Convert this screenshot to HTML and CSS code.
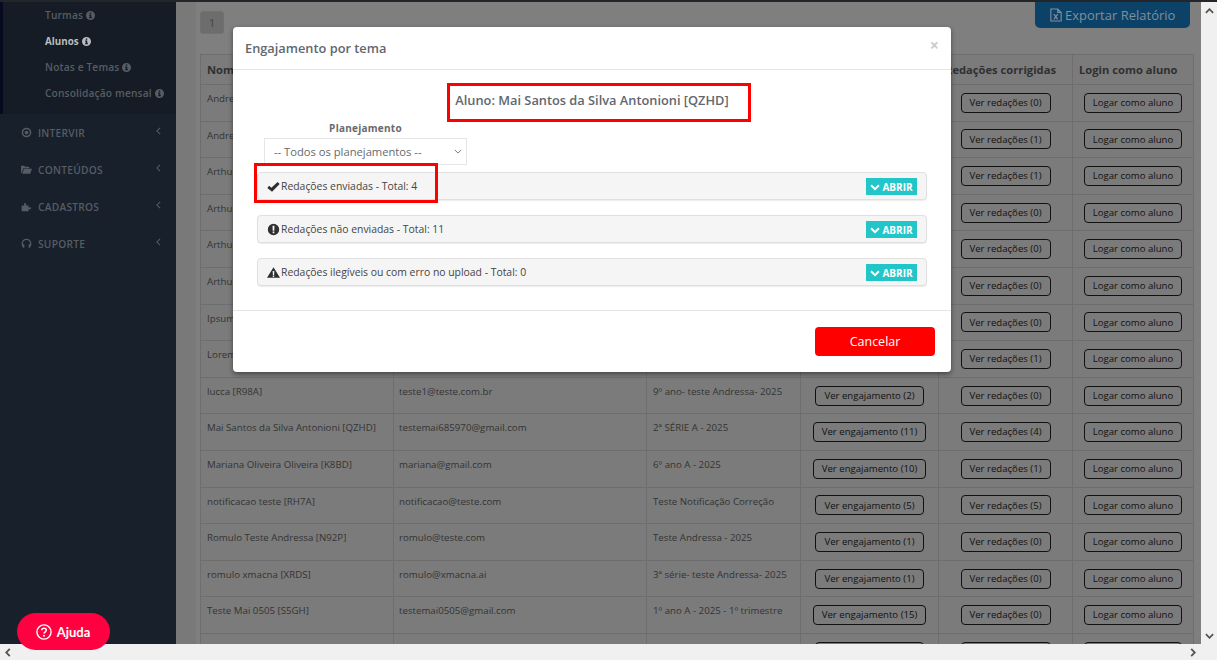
FILE: index.html
```html
<!DOCTYPE html>
<html lang="pt-BR">
<head>
<meta charset="utf-8">
<title>Engajamento por tema</title>
<link rel="stylesheet" href="styles.css">
</head>
<body>
<svg class="defs" aria-hidden="true">
  <symbol id="i-info" viewBox="0 0 16 16"><path fill-rule="evenodd" d="M8 0a8 8 0 1 1 0 16A8 8 0 0 1 8 0zM6.600 2.600v2.500h2.800V2.600zM5.400 6.400v1.700h1.200v3.200H5.400V13h5.200v-1.700H9.400V6.400z"/></symbol>
  <symbol id="i-down" viewBox="0 0 16 16"><path d="M.6 6.200 2.800 4 8 9.200 13.200 4l2.200 2.200L8 13.600z"/></symbol>
</svg>
<div class="screen">
  <div class="topline"></div>
  <div class="main">
    <aside class="sidebar">
      <ul class="submenu">
        <li>Turmas <svg class="info"><use href="#i-info"/></svg></li>
        <li class="active">Alunos <svg class="info"><use href="#i-info"/></svg></li>
        <li>Notas e Temas <svg class="info"><use href="#i-info"/></svg></li>
        <li>Consolidação mensal <svg class="info"><use href="#i-info"/></svg></li>
      </ul>
      <ul class="menu">
        <li>
          <svg class="micon" viewBox="0 0 16 16"><path fill-rule="evenodd" d="M8 1a7 7 0 1 1 0 14A7 7 0 0 1 8 1zm0 2.200a4.800 4.800 0 1 0 0 9.600a4.800 4.800 0 0 0 0-9.600zM8 5.300a2.700 2.700 0 1 1 0 5.400a2.700 2.700 0 0 1 0-5.400z"/></svg>
          <span>INTERVIR</span><svg class="angle" viewBox="0 0 6 10"><path d="M5 1 1 5l4 4"/></svg>
        </li>
        <li>
          <svg class="micon" viewBox="0 0 16 16"><path d="M0 13V3.500L.8 2.700h4l1 1.300h5.400l.8.800V6H3.500L.9 13zM1.800 14 4.300 7H16l-2.700 7z"/></svg>
          <span>CONTEÚDOS</span><svg class="angle" viewBox="0 0 6 10"><path d="M5 1 1 5l4 4"/></svg>
        </li>
        <li>
          <svg class="micon" viewBox="0 0 16 16"><path d="M1 6.500h3.300c.6 0 .7-.5.300-1-.7-.9-.3-2.500 1.300-2.500s2 1.600 1.300 2.500c-.4.500-.3 1 .3 1H11v2.700c0 .6.500.7 1 .3.900-.7 2.500-.3 2.500 1.200s-1.600 1.900-2.500 1.200c-.5-.4-1-.3-1 .3V15H1z"/></svg>
          <span>CADASTROS</span><svg class="angle" viewBox="0 0 6 10"><path d="M5 1 1 5l4 4"/></svg>
        </li>
        <li>
          <svg class="micon" viewBox="0 0 16 16"><path d="M1 11V8a7 7 0 0 1 14 0v3h-1.800V8a5.200 5.200 0 0 0-10.400 0v3zM2.500 9h2.300v5H3.500a1.500 1.500 0 0 1-1.500-1.500V9.500zM11.200 9h2.300l.5.500v3a1.500 1.500 0 0 1-1.500 1.500h-1.300z"/></svg>
          <span>SUPORTE</span><svg class="angle" viewBox="0 0 6 10"><path d="M5 1 1 5l4 4"/></svg>
        </li>
      </ul>
    </aside>
    <main class="content">
      <div class="toolbar">
        <span class="page-num">1</span>
        <button class="export" type="button">
          <svg class="export-icon" viewBox="0 0 14 16"><path fill="none" stroke="currentColor" stroke-width="1.300" d="M1 1h8l4 4v10H1zM9 1v4h4"/><path fill="none" stroke="currentColor" stroke-width="1.500" d="m4.500 7 4.500 6M9 7l-4.500 6"/></svg>Exportar Relatório
        </button>
      </div>
      <table class="grid">
        <colgroup><col class="c1"><col class="c2"><col class="c3"><col class="c4"><col class="c5"><col class="c6"></colgroup>
        <thead><tr><th>Nome</th><th>E-mail</th><th>Turma</th><th>Engajamento</th><th>Redações corrigidas</th><th>Login como aluno</th></tr></thead>
        <tbody>
          <tr><td>Andressa</td><td></td><td></td><td class="mid"><button class="btn" type="button">Ver engajamento (1)</button></td><td class="mid"><button class="btn" type="button">Ver redações (0)</button></td><td class="mid"><button class="btn" type="button">Logar como aluno</button></td></tr>
          <tr><td>Andressa</td><td></td><td></td><td class="mid"><button class="btn" type="button">Ver engajamento (1)</button></td><td class="mid"><button class="btn" type="button">Ver redações (1)</button></td><td class="mid"><button class="btn" type="button">Logar como aluno</button></td></tr>
          <tr><td>Arthur</td><td></td><td></td><td class="mid"><button class="btn" type="button">Ver engajamento (1)</button></td><td class="mid"><button class="btn" type="button">Ver redações (1)</button></td><td class="mid"><button class="btn" type="button">Logar como aluno</button></td></tr>
          <tr><td>Arthur</td><td></td><td></td><td class="mid"><button class="btn" type="button">Ver engajamento (1)</button></td><td class="mid"><button class="btn" type="button">Ver redações (0)</button></td><td class="mid"><button class="btn" type="button">Logar como aluno</button></td></tr>
          <tr><td>Arthur</td><td></td><td></td><td class="mid"><button class="btn" type="button">Ver engajamento (1)</button></td><td class="mid"><button class="btn" type="button">Ver redações (0)</button></td><td class="mid"><button class="btn" type="button">Logar como aluno</button></td></tr>
          <tr><td>Arthur</td><td></td><td></td><td class="mid"><button class="btn" type="button">Ver engajamento (1)</button></td><td class="mid"><button class="btn" type="button">Ver redações (0)</button></td><td class="mid"><button class="btn" type="button">Logar como aluno</button></td></tr>
          <tr><td>Ipsum</td><td></td><td></td><td class="mid"><button class="btn" type="button">Ver engajamento (1)</button></td><td class="mid"><button class="btn" type="button">Ver redações (0)</button></td><td class="mid"><button class="btn" type="button">Logar como aluno</button></td></tr>
          <tr><td>Lorem</td><td></td><td></td><td class="mid"><button class="btn" type="button">Ver engajamento (1)</button></td><td class="mid"><button class="btn" type="button">Ver redações (1)</button></td><td class="mid"><button class="btn" type="button">Logar como aluno</button></td></tr>
          <tr><td>lucca [R98A]</td><td>teste1@teste.com.br</td><td>9º ano- teste Andressa- 2025</td><td class="mid"><button class="btn" type="button">Ver engajamento (2)</button></td><td class="mid"><button class="btn" type="button">Ver redações (0)</button></td><td class="mid"><button class="btn" type="button">Logar como aluno</button></td></tr>
          <tr><td>Mai Santos da Silva Antonioni [QZHD]</td><td>testemai685970@gmail.com</td><td>2ª SÉRIE A - 2025</td><td class="mid"><button class="btn" type="button">Ver engajamento (11)</button></td><td class="mid"><button class="btn" type="button">Ver redações (4)</button></td><td class="mid"><button class="btn" type="button">Logar como aluno</button></td></tr>
          <tr><td>Mariana Oliveira Oliveira [K8BD]</td><td>mariana@gmail.com</td><td>6º ano A - 2025</td><td class="mid"><button class="btn" type="button">Ver engajamento (10)</button></td><td class="mid"><button class="btn" type="button">Ver redações (1)</button></td><td class="mid"><button class="btn" type="button">Logar como aluno</button></td></tr>
          <tr><td>notificacao teste [RH7A]</td><td>notificacao@teste.com</td><td>Teste Notificação Correção</td><td class="mid"><button class="btn" type="button">Ver engajamento (5)</button></td><td class="mid"><button class="btn" type="button">Ver redações (5)</button></td><td class="mid"><button class="btn" type="button">Logar como aluno</button></td></tr>
          <tr><td>Romulo Teste Andressa [N92P]</td><td>romulo@teste.com</td><td>Teste Andressa - 2025</td><td class="mid"><button class="btn" type="button">Ver engajamento (1)</button></td><td class="mid"><button class="btn" type="button">Ver redações (0)</button></td><td class="mid"><button class="btn" type="button">Logar como aluno</button></td></tr>
          <tr><td>romulo xmacna [XRDS]</td><td>romulo@xmacna.ai</td><td>3ª série- teste Andressa- 2025</td><td class="mid"><button class="btn" type="button">Ver engajamento (1)</button></td><td class="mid"><button class="btn" type="button">Ver redações (0)</button></td><td class="mid"><button class="btn" type="button">Logar como aluno</button></td></tr>
          <tr><td>Teste Mai 0505 [S5GH]</td><td>testemai0505@gmail.com</td><td>1º ano A - 2025 - 1º trimestre</td><td class="mid"><button class="btn" type="button">Ver engajamento (15)</button></td><td class="mid"><button class="btn" type="button">Ver redações (0)</button></td><td class="mid"><button class="btn" type="button">Logar como aluno</button></td></tr>
          <tr><td>Tema 2 [X9ZP]</td><td>tema2@teste.com</td><td>2º ano A - teste Andressa - 2025</td><td class="mid"><button class="btn" type="button">Ver engajamento (1)</button></td><td class="mid"><button class="btn" type="button">Ver redações (0)</button></td><td class="mid"><button class="btn" type="button">Logar como aluno</button></td></tr>
        </tbody>
      </table>
    </main>
    <div class="vbar">
      <svg class="sb-arrow" viewBox="0 0 10 6"><path d="M1 5 5 1l4 4"/></svg>
      <svg class="sb-arrow" viewBox="0 0 10 6"><path d="M1 1l4 4 4-4"/></svg>
    </div>
    <section class="modal">
      <header class="modal-head"><h2>Engajamento por tema</h2><span class="close">×</span></header>
      <div class="modal-body">
        <h3 class="student">Aluno: Mai Santos da Silva Antonioni [QZHD]</h3>
        <div class="filter">
          <label class="filter-label" for="plan">Planejamento</label>
          <select class="filter-select" id="plan"><option>-- Todos os planejamentos --</option></select>
        </div>
        <div class="panel">
          <span class="panel-title"><svg class="picon" viewBox="0 0 16 16"><path d="M.4 9.800 2.600 7.200l2.800 2.400L13 2.400l2.600 2.600-9.400 9.600z"/></svg>Redações enviadas - Total: 4</span>
          <span class="open"><svg class="open-icon"><use href="#i-down"/></svg>ABRIR</span>
        </div>
        <div class="panel">
          <span class="panel-title"><svg class="picon" viewBox="0 0 16 16"><path fill-rule="evenodd" d="M8 1a7 7 0 1 1 0 14A7 7 0 0 1 8 1zM6.800 3.400l.2 6h2l.2-6zM7 10.500v2h2v-2z"/></svg>Redações não enviadas - Total: 11</span>
          <span class="open"><svg class="open-icon"><use href="#i-down"/></svg>ABRIR</span>
        </div>
        <div class="panel">
          <span class="panel-title"><svg class="picon" viewBox="0 0 16 16"><path fill-rule="evenodd" d="M8 1.500 16 14.500H0zM7 6l.2 5h1.600L9 6zM7.100 11.800v1.700h1.800v-1.700z"/></svg>Redações ilegíveis ou com erro no upload - Total: 0</span>
          <span class="open"><svg class="open-icon"><use href="#i-down"/></svg>ABRIR</span>
        </div>
      </div>
      <footer class="modal-foot"><button class="cancel" type="button">Cancelar</button></footer>
      <div class="mark mark-student"></div>
      <div class="mark mark-panel"></div>
    </section>
  </div>
  <div class="hbar">
    <svg class="sb-arrow-h" viewBox="0 0 6 10"><path d="M5 1 1 5l4 4"/></svg>
    <svg class="sb-arrow-h" viewBox="0 0 6 10"><path d="M1 1l4 4-4 4"/></svg>
  </div>
  <button class="help" type="button">
    <svg class="help-icon" viewBox="0 0 16 16"><circle cx="8" cy="8" r="7.100" fill="none" stroke="#fff" stroke-width="1.400"/><path fill="none" stroke="#fff" stroke-width="1.500" d="M5.700 6.200C5.800 4.800 6.800 4.200 8 4.200c1.300 0 2.300.8 2.300 1.900 0 1.700-2.300 1.700-2.300 3.500"/><circle cx="8" cy="11.800" r="1" fill="#fff"/></svg>Ajuda
  </button>
</div>
</body>
</html>
```
FILE: styles.css
```css
* { box-sizing: border-box; }
html, body { margin: 0; height: 100%; overflow: hidden; }
body { font-family: "Open Sans", "Liberation Sans", sans-serif; font-size: 11px; color: #3a3a3a; background: #808080; }
.defs { display: none; }
ul { list-style: none; margin: 0; padding: 0; }
button { font-family: inherit; }

.screen { position: relative; display: flex; flex-direction: column; width: 1217px; height: 660px; overflow: hidden; }
.topline { height: 2px; flex: none; background: #22262b; }
.main { position: relative; flex: 1; display: flex; min-height: 0; }

.sidebar { width: 176px; flex: none; background: #18202b; }
.submenu { height: 112px; background: #151c25; border-left: 3px solid #050a1e; }
.submenu li { display: flex; align-items: center; gap: 3px; height: 26px; padding-left: 42px; color: #575d64; font-size: 10.200px; font-weight: 600; letter-spacing: .15px; white-space: nowrap; }
.submenu li.active { color: #b9bcbf; font-size: 9.800px; font-weight: 700; letter-spacing: 0; }
.info { width: 9px; height: 9px; fill: currentColor; }
.menu li { display: flex; align-items: center; height: 37px; padding-left: 21px; color: #565c64; font-size: 10.200px; font-weight: 600; letter-spacing: .25px; }
.menu li span { margin-left: 6px; }
.micon { width: 11px; height: 11px; fill: #565c64; }
.angle { width: 5px; height: 8px; margin-left: auto; margin-right: 15px; margin-top: -4px; fill: none; stroke: #565c64; stroke-width: 1.300; }

.content { flex: 1; min-width: 0; padding: 0 7px 0 4px; background: #7f7f7f; border-left: 20px solid #797979; overflow: hidden; }
.toolbar { display: flex; justify-content: space-between; align-items: flex-start; height: 52px; }
.page-num { display: flex; align-items: center; justify-content: center; width: 24px; height: 23px; margin-top: 9px; border-radius: 3px; background: #6d6d6d; border: 1px solid #717171; color: #3f3f3f; font-size: 10.500px; }
.export { display: flex; align-items: center; gap: 3px; width: 155px; height: 26px; margin-right: 4px; padding: 0 0 0 15px; border: 0; border-radius: 0 0 5px 5px; background: #0d4268; color: #7e8f9d; font-size: 13px; }
.export-icon { width: 12px; height: 14px; }

.grid { width: 993px; border-collapse: collapse; table-layout: fixed; background: #7b7b7b; }
.c1 { width: 193px; } .c2 { width: 253px; } .c3 { width: 154px; } .c4 { width: 138px; } .c5 { width: 134px; } .c6 { width: 121px; }
.grid th, .grid td { border: 1px solid #6e6e6e; padding: 0 6px; text-align: left; }
.grid th { height: 30px; font-size: 11.200px; font-weight: 700; color: #303030; white-space: nowrap; }
.grid td { height: 36.600px; vertical-align: top; padding-top: 7px; font-size: 9.700px; color: #333; white-space: nowrap; overflow: hidden; }
.grid td:nth-child(2) { padding-left: 5px; }
.grid td.mid { text-align: center; vertical-align: middle; padding: 0; overflow: visible; }
.btn { height: 20px; padding: 0 8px; border: 1px solid #111; border-radius: 4px; background: transparent; color: #111; font-size: 9.600px; line-height: 1; white-space: nowrap; }

.vbar { width: 16px; flex: none; display: flex; flex-direction: column; justify-content: space-between; align-items: center; padding: 6px 0 5px; background: #f0f0f0; }
.sb-arrow { width: 9px; height: 6px; fill: none; stroke: #555; stroke-width: 2; }
.hbar { height: 16px; flex: none; display: flex; justify-content: space-between; align-items: center; padding: 0 21px 0 5px; background: #f0f0f0; }
.sb-arrow-h { width: 6px; height: 9px; fill: none; stroke: #555; stroke-width: 2; }

.modal { position: absolute; left: 233px; top: 25px; width: 718px; height: 345px; display: flex; flex-direction: column; background: #fff; border-radius: 4px; box-shadow: 0 2px 5px rgba(0,0,0,.45); color: #676a6c; }
.modal-head { display: flex; justify-content: space-between; align-items: center; height: 43px; flex: none; padding: 0 12px; border-bottom: 1px solid #e5e5e5; }
.modal-head h2 { margin: 0; font-size: 12.800px; font-weight: 600; color: #5f6770; }
.close { margin-top: -6px; font-size: 16px; font-weight: 700; color: #ccc; line-height: 1; }
.modal-body { flex: 1; padding: 0 24px; }
.student { margin: 21px 0 0; text-align: center; font-size: 12.800px; line-height: 18px; font-weight: 600; color: #5f6770; }
.filter { width: 203px; margin: 12px 0 0 7px; }
.filter-label { display: block; text-align: center; font-size: 10px; line-height: 14px; font-weight: 700; letter-spacing: .25px; color: #676a6c; }
.filter-select { display: block; width: 203px; height: 27px; margin-top: 3px; padding: 0 9px; appearance: none; background: #fff url("data:image/svg+xml,%3Csvg xmlns='http://www.w3.org/2000/svg' width='8' height='5' viewBox='0 0 10 6'%3E%3Cpath d='M1 1l4 4 4-4' fill='none' stroke='%23777' stroke-width='1.200'/%3E%3C/svg%3E") no-repeat right 4px center; border: 1px solid #e5e6e7; border-radius: 0; font-family: inherit; font-size: 11.200px; color: #676a6c; }
.panel { display: flex; justify-content: space-between; align-items: center; height: 28px; margin: 7px 0 15px; padding: 0 9px; background: #f5f5f5; border: 1px solid #e0e0e0; border-radius: 4px; box-shadow: 0 1px 1px rgba(0,0,0,.08); color: #444; font-size: 10.400px; }
.panel + .panel { margin-top: 0; }
.panel-title { display: flex; align-items: center; gap: 1px; }
.picon { width: 13px; height: 13px; fill: #2f2f2f; }
.open { display: flex; align-items: center; justify-content: center; gap: 2px; width: 51px; height: 17px; margin-top: 1px; background: #23c6c8; color: #fff; font-size: 10px; font-weight: 700; }
.open-icon { width: 10px; height: 10px; fill: #fff; }
.modal-foot { flex: none; display: flex; justify-content: flex-end; align-items: flex-start; height: 62px; padding: 16px 16px 0 0; border-top: 1px solid #e5e5e5; }
.cancel { width: 120px; height: 29px; border: 0; border-radius: 4px; background: #ff0000; color: #fff; font-size: 12.500px; }
.mark { position: absolute; border: 3px solid #ff0000; pointer-events: none; }
.mark-student { left: 214px; top: 56px; width: 304px; height: 39px; }
.mark-panel { left: 21px; top: 136px; width: 184px; height: 40px; }

.help { position: absolute; left: 17px; top: 613px; display: flex; align-items: center; justify-content: center; gap: 5px; width: 93px; height: 37px; padding: 0 1px 0 0; border: 0; border-radius: 19px; background: #ff0040; color: #fff; font-family: Lato, "Open Sans", sans-serif; font-size: 13px; font-weight: 700; }
.help-icon { width: 16px; height: 16px; }
```
